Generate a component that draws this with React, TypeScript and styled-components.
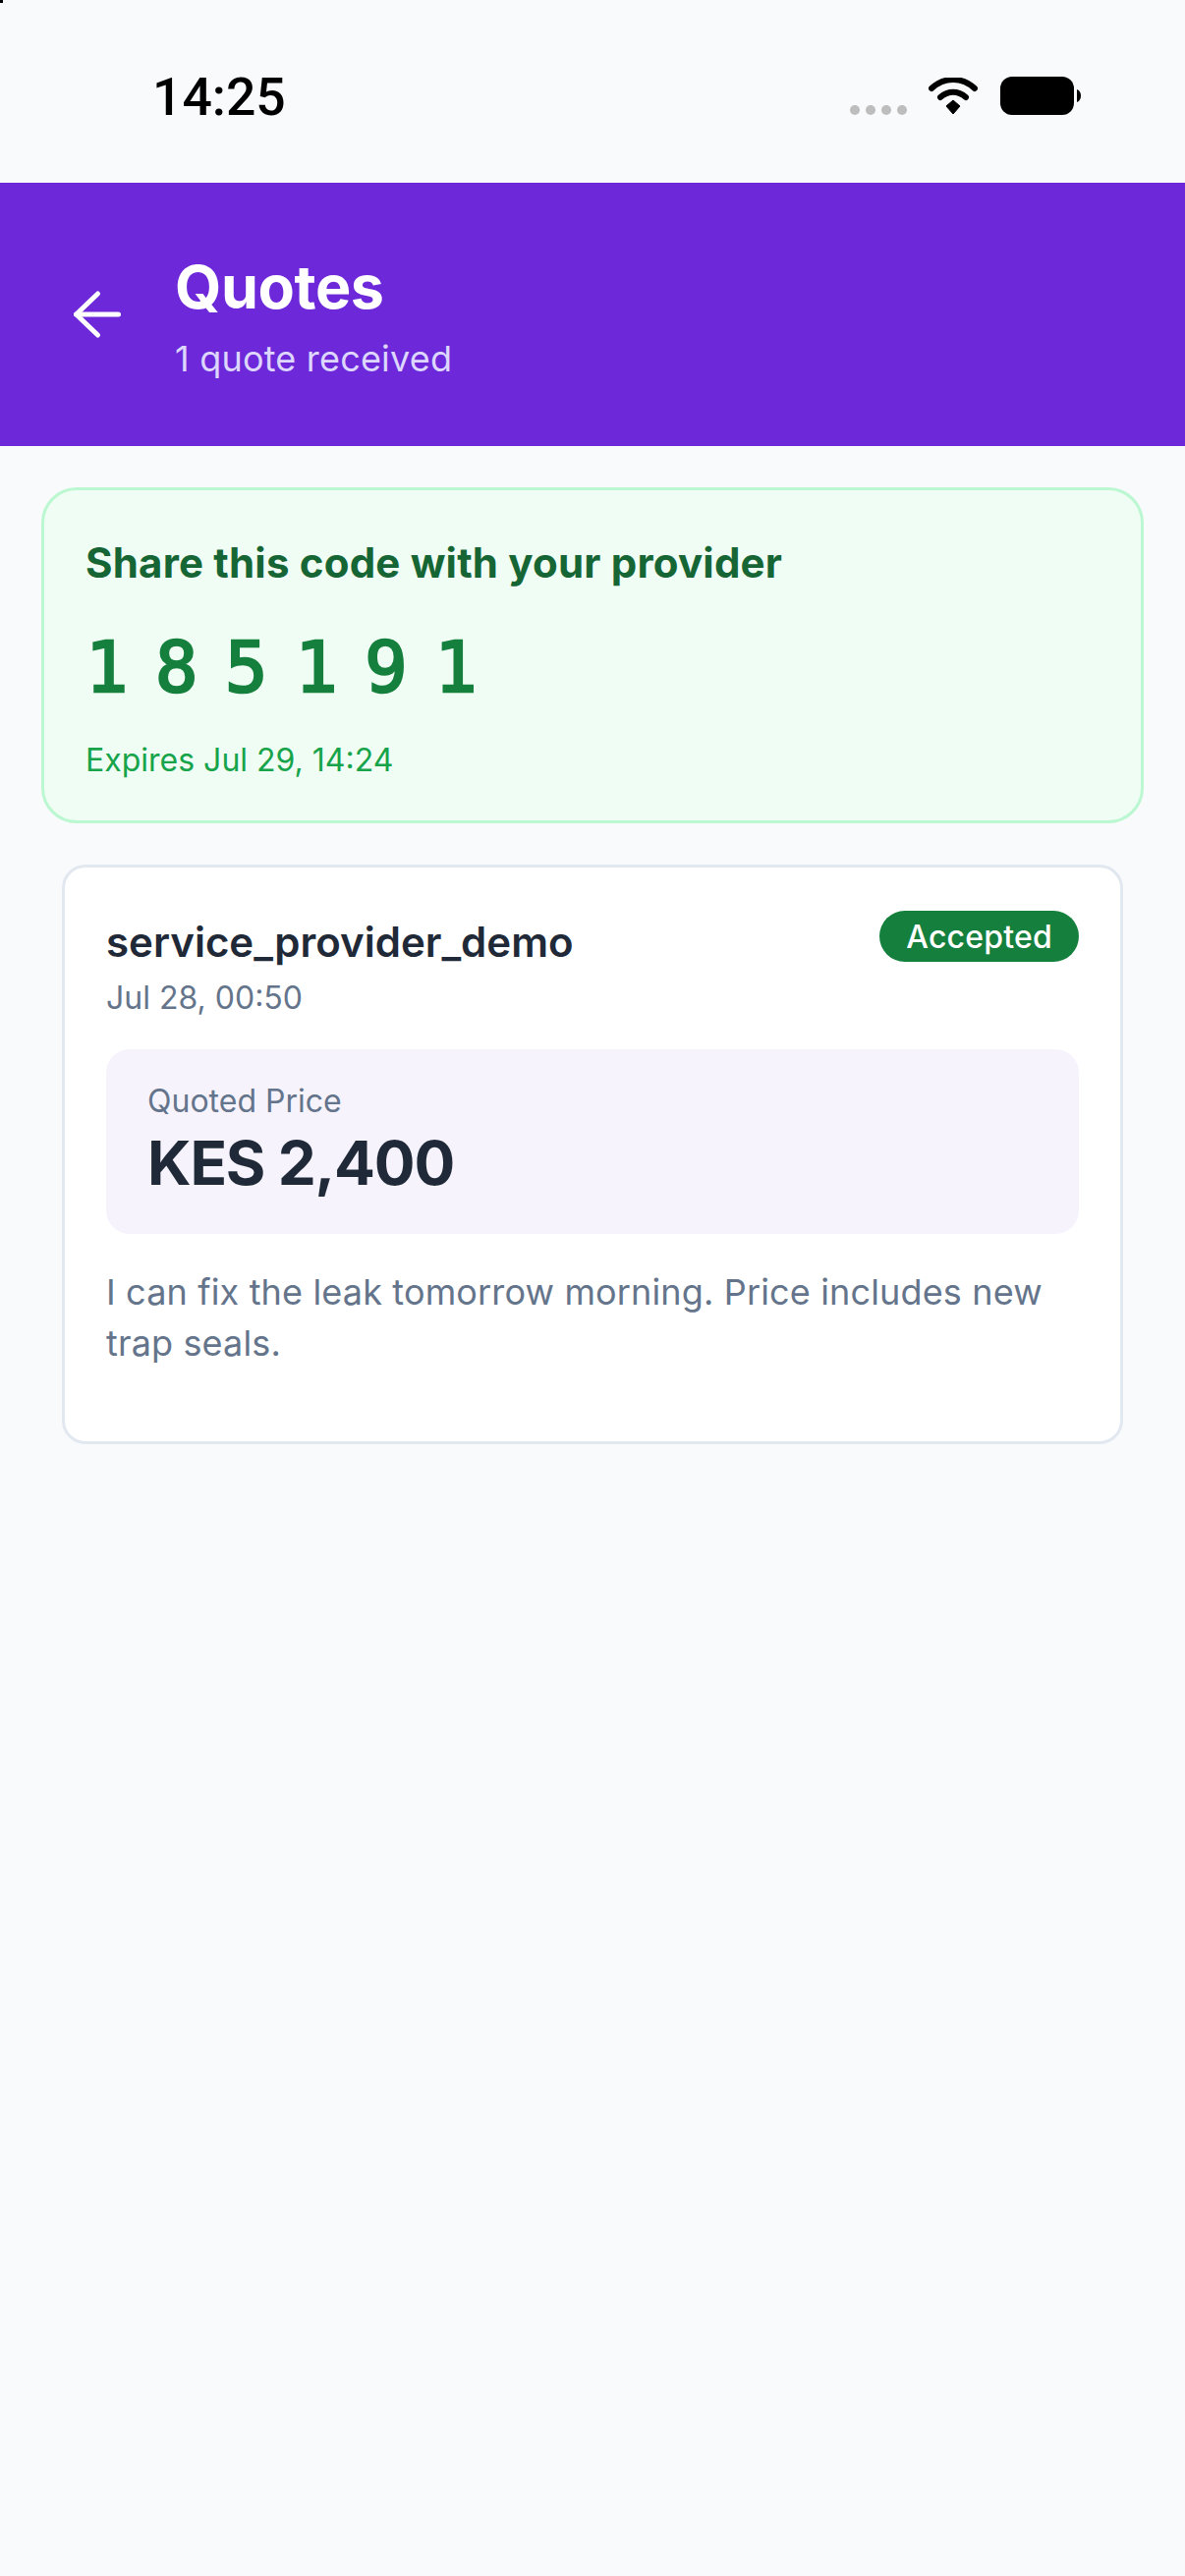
import React from 'react'
import styled, { createGlobalStyle } from 'styled-components'

const GlobalStyle = createGlobalStyle`
  html, body {
    margin: 0;
    padding: 0;
    background: #f8fafc;
  }
  * {
    box-sizing: border-box;
  }
`

const Screen = styled.div`
  position: relative;
  width: 1206px;
  height: 2622px;
  overflow: hidden;
  background: #f8fafc;
  font-family: Inter, "Liberation Sans", sans-serif;
`

const CornerMark = styled.div`
  position: absolute;
  left: 0;
  top: 0;
  width: 3px;
  height: 3px;
  background: #000;
`

const StatusBar = styled.div`
  height: 186px;
  display: flex;
  align-items: center;
  justify-content: space-between;
  padding: 10px 106px 0 155px;
`

const Clock = styled.div`
  font-family: Roboto, Inter, sans-serif;
  font-size: 53.500px;
  font-weight: 500;
  color: #000;
`

const StatusIcons = styled.div`
  display: flex;
  align-items: center;
`

const Signal = styled.div`
  display: flex;
  gap: 6px;
  margin: 28px 22px 0 0;
`

const SignalDot = styled.span`
  width: 10px;
  height: 10px;
  border-radius: 50%;
  background: #bdbdbd;
`

const Header = styled.header`
  height: 268px;
  background: #6d28d9;
  display: flex;
  align-items: center;
  gap: 54px;
  padding: 0 72px;
`

const BackIcon = styled.svg`
  width: 52px;
  height: 52px;
  flex: none;
`

const HeaderText = styled.div`
  display: flex;
  flex-direction: column;
  margin-top: 5px;
`

const Title = styled.div`
  font-size: 61px;
  line-height: 72px;
  font-weight: 700;
  letter-spacing: -0.4px;
  color: #fff;
`

const Subtitle = styled.div`
  font-size: 36px;
  line-height: 48px;
  font-weight: 400;
  letter-spacing: 0.2px;
  color: #ddd6fe;
  margin-top: 13px;
`

const Content = styled.main`
  padding: 42px;
`

const CodeCard = styled.section`
  height: 342px;
  padding: 42px;
  border: 3px solid #bbf7d0;
  border-radius: 36px;
  background: #f0fdf4;
`

const CodeLabel = styled.div`
  font-size: 42px;
  line-height: 64px;
  font-weight: 700;
  letter-spacing: 0.2px;
  color: #166534;
`

const CodeValue = styled.div`
  margin-top: 32px;
  font-family: "DejaVu Sans Mono", monospace;
  font-size: 72px;
  line-height: 84px;
  font-weight: 400;
  letter-spacing: 27.700px;
  -webkit-text-stroke: 2.500px #15803d;
  color: #15803d;
`

const CodeExpiry = styled.div`
  margin-top: 32px;
  font-size: 32px;
  line-height: 42px;
  color: #16a34a;
`

const QuoteCard = styled.section`
  height: 590px;
  margin: 42px 21px 0;
  padding: 42px;
  border: 3px solid #e2e8f0;
  border-radius: 24px;
  background: #fff;
`

const QuoteHeader = styled.div`
  display: flex;
  justify-content: space-between;
  align-items: flex-start;
`

const ProviderName = styled.div`
  font-size: 42px;
  line-height: 68px;
  font-weight: 600;
  color: #1f2937;
`

const QuoteDate = styled.div`
  font-size: 32px;
  line-height: 42px;
  color: #64748b;
  margin-top: 2px;
`

const Badge = styled.span`
  height: 52px;
  margin-top: 2px;
  padding: 0 27px;
  display: flex;
  align-items: center;
  border-radius: 26px;
  background: #15803d;
  color: #fff;
  font-size: 32px;
  font-weight: 500;
  letter-spacing: 0.2px;
`

const PriceBox = styled.div`
  height: 188px;
  margin-top: 31px;
  padding: 33px 42px;
  border-radius: 24px;
  background: #f6f3fd;
`

const PriceLabel = styled.div`
  font-size: 32px;
  line-height: 40px;
  color: #64748b;
`

const PriceValue = styled.div`
  margin-top: 7px;
  font-size: 62px;
  line-height: 72px;
  font-weight: 700;
  letter-spacing: -1.200px;
  color: #1f2937;
`

const Message = styled.p`
  margin: 33px 0 0;
  font-size: 36px;
  line-height: 52px;
  letter-spacing: 0.15px;
  color: #64748b;
`

const WifiIcon = () => (
  <svg width="50" height="38" viewBox="0 0 50 38" fill="none">
    <path d="M3 11 C16 -1 34 -1 47 11" stroke="#000" strokeWidth="6" strokeLinecap="round" />
    <path d="M12 20 C20 13 30 13 38 20" stroke="#000" strokeWidth="6" strokeLinecap="round" />
    <path d="M18 29 L25 23 L32 29 L25 37 Z" fill="#000" stroke="#000" strokeWidth="1" strokeLinejoin="round" />
  </svg>
)

const BatteryIcon = () => (
  <svg width="82" height="40" viewBox="0 0 82 40" style={{ marginLeft: 23 }}>
    <rect x="0" y="0" width="75" height="39" rx="12" fill="#000" />
    <path d="M78 13 C81 14 82 17 82 19.500 C82 22 81 25 78 26 Z" fill="#000" />
  </svg>
)

const App = () => {
  return (
    <Screen>
      <GlobalStyle />
      <CornerMark />
      <StatusBar>
        <Clock>14:25</Clock>
        <StatusIcons>
          <Signal>
            <SignalDot />
            <SignalDot />
            <SignalDot />
            <SignalDot />
          </Signal>
          <WifiIcon />
          <BatteryIcon />
        </StatusIcons>
      </StatusBar>
      <Header>
        <BackIcon viewBox="0 0 52 52" fill="none" stroke="#fff" strokeWidth="5" strokeLinecap="round" strokeLinejoin="round">
          <path d="M27.500 5 L5.500 26 L27.500 47" />
          <path d="M5.500 26 H48.500" />
        </BackIcon>
        <HeaderText>
          <Title>Quotes</Title>
          <Subtitle>1 quote received</Subtitle>
        </HeaderText>
      </Header>
      <Content>
        <CodeCard>
          <CodeLabel>Share this code with your provider</CodeLabel>
          <CodeValue>185191</CodeValue>
          <CodeExpiry>Expires Jul 29, 14:24</CodeExpiry>
        </CodeCard>
        <QuoteCard>
          <QuoteHeader>
            <div>
              <ProviderName>service_provider_demo</ProviderName>
              <QuoteDate>Jul 28, 00:50</QuoteDate>
            </div>
            <Badge>Accepted</Badge>
          </QuoteHeader>
          <PriceBox>
            <PriceLabel>Quoted Price</PriceLabel>
            <PriceValue>KES 2,400</PriceValue>
          </PriceBox>
          <Message>I can fix the leak tomorrow morning. Price includes new trap seals.</Message>
        </QuoteCard>
      </Content>
    </Screen>
  )
}

export default App
